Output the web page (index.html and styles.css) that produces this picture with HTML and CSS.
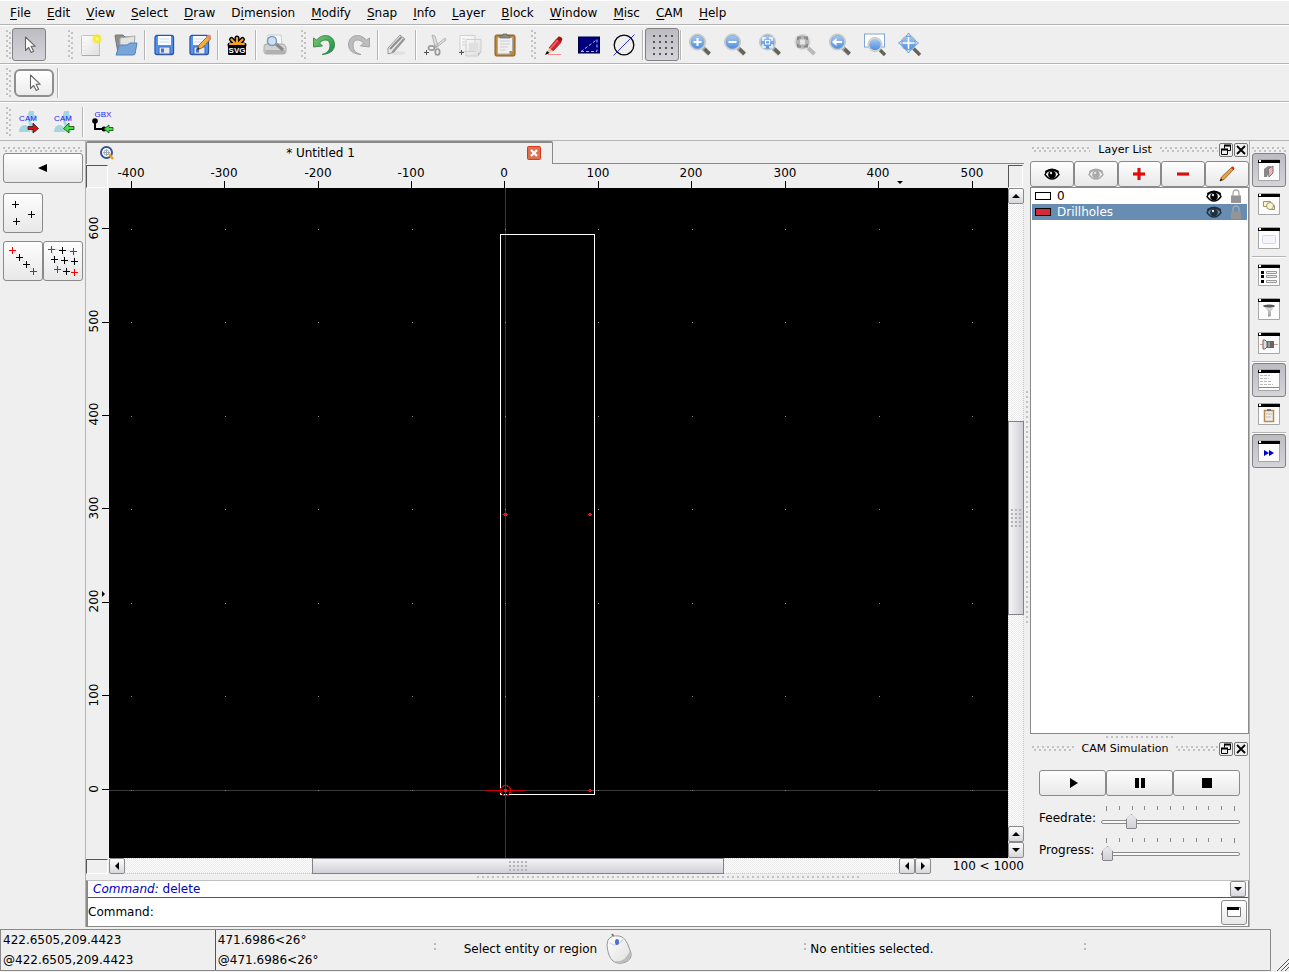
FILE: index.html
```
<!DOCTYPE html>
<html lang="en">
<head>
  <meta charset="UTF-8">
  <title>Untitled 1</title>
  <link rel="stylesheet" href="styles.css">
</head>
<body>

  <svg class="sprite" width="0" height="0" aria-hidden="true">
    <defs>
      <linearGradient id="blue" x1="0" y1="0" x2="0" y2="1"><stop offset="0" stop-color="#a9c8ee"/><stop offset="1" stop-color="#4d8fe0"/></linearGradient>
      <linearGradient id="paper" x1="0" y1="0" x2="1" y2="1"><stop offset="0" stop-color="#fff"/><stop offset="1" stop-color="#dedede"/></linearGradient>
      <linearGradient id="green" x1="0" y1="0" x2="1" y2="1"><stop offset="0" stop-color="#7ecb6c"/><stop offset="1" stop-color="#158a4a"/></linearGradient>
      <linearGradient id="metal" x1="0" y1="0" x2="0" y2="1"><stop offset="0" stop-color="#e6e6e6"/><stop offset="1" stop-color="#9b9b9b"/></linearGradient>
      <radialGradient id="glow"><stop offset="0" stop-color="#ffffb0"/><stop offset=".4" stop-color="#f5ea20"/><stop offset="1" stop-color="#f5ea20" stop-opacity="0"/></radialGradient>
    </defs>
    <symbol id="arrow" viewBox="0 0 24 24"><path d="M8.500 4v13.500l3.200-3 2.500 5 2.400-1.200-2.500-5h4.200z" fill="#fff" stroke="#666" stroke-width="1.100" stroke-linejoin="round"/></symbol>
    <symbol id="new" viewBox="0 0 24 24"><rect x="2.500" y="2.500" width="18" height="20" rx="1" fill="url(#paper)" stroke="#c2c2c2"/><path d="M5 5v14" stroke="#ddd" stroke-dasharray="1 3"/><path d="M3 22.500h18" stroke="#aaa"/><circle cx="18" cy="6" r="6" fill="url(#glow)"/></symbol>
    <symbol id="open" viewBox="0 0 24 24"><path d="M1 3q0-1 1-1h7l2 2h9v16H4z" fill="#8d8d8d" stroke="#777"/><path d="M6 5l15-2-1 10H6z" fill="#e3e3e3" stroke="#aaa"/><path d="M5 13q1-1 2-1h6l3-2h7l-2 11q-.5 1-2 1H2z" fill="#78a6d8" stroke="#5583b9"/></symbol>
    <symbol id="save" viewBox="0 0 24 24"><rect x="3" y="2.500" width="18.500" height="19" rx="2" fill="#5494ee" stroke="#3155a5" stroke-width="1.300"/><path d="M6 3h13v9H6z" fill="#f8fbff"/><path d="M7.500 6h10M7.500 9h10" stroke="#cbd9ee"/><path d="M7 14h11v7H7z" fill="#e6e8ee" stroke="#3c66b5"/><path d="M9 15.500h3v4H9z" fill="#4576c4"/></symbol>
    <symbol id="pen" viewBox="0 0 24 24"><path d="M10 17l2-5 9-9 3 2.500-9 9.500z" fill="#f6af3c" stroke="#9a6319" stroke-width=".9"/><path d="M19 4l2-2q1-1 2.500.3T24 5l-2 2z" fill="#e98b7b"/><path d="M10 17l1-3 1.700 1.700z" fill="#222"/></symbol>
    <symbol id="flower" viewBox="0 0 24 24"><g stroke="#000" stroke-width="5" stroke-linecap="round"><path d="M12 12V5M12 12L6.500 6.500M12 12l5.500-5.500M12 12H5M12 12h7"/></g><g stroke="#f5a126" stroke-width="2.200" stroke-linecap="round"><path d="M12 12V5M12 12L6.500 6.500M12 12l5.500-5.500M12 11H5M12 11h7"/></g><rect x="3" y="12" width="18" height="10" rx="1"/></symbol>
    <symbol id="print" viewBox="0 0 24 24"><path d="M5 2h13l1 10H4z" fill="#fafafa" stroke="#ccc"/><path d="M1 13q0-2 3-2h15q3 0 4 3v5q0 2-3 2H4q-3 0-3-2z" fill="#d2d2d2" stroke="#aaa"/><path d="M2 17h20v4H3z" fill="#b0b0b0"/><path d="M13 11l7 6" stroke="#888" stroke-width="3"/><circle cx="9" cy="8" r="4.500" fill="#d1e0f1" stroke="#789bc2" stroke-width="1.500"/></symbol>
    <symbol id="undo" viewBox="0 0 24 24"><path d="M1.500 5l3 2Q10 1 17 3q6 3 5.500 9.500T14 21l-4 .5q8-2 8-8.500t-5-6q-3 0-5.500 3l3 3-9 1z" fill="url(#green)" stroke="#267d3a" stroke-width=".8"/></symbol>
    <symbol id="redo" viewBox="0 0 24 24"><path d="M22.500 5l-3 2Q14 1 7 3q-6 3-5.500 9.500T10 21l4 .5q-8-2-8-8.500t5-6q3 0 5.500 3l-3 3 9 1z" fill="#bdbdbd" stroke="#9b9b9b" stroke-width=".8"/></symbol>
    <symbol id="eraser" viewBox="0 0 24 24"><ellipse cx="12" cy="20" rx="9" ry="2" fill="#e1e1e1"/><path d="M3 15L15 2l5 4L9 19l-6 2z" fill="#e8e8e8" stroke="#999"/><path d="M5 16L16.500 4" stroke="#8d8d8d" stroke-width="2"/><path d="M7.500 19L19 6" stroke="#999" stroke-width="2"/></symbol>
    <symbol id="cut" viewBox="0 0 24 24"><path d="M12 14L9 2l3 1 3 10zM12 13L22 5l1 2-10 8z" fill="#ddd" stroke="#aaa" stroke-width=".8"/><ellipse cx="8.500" cy="15" rx="3" ry="2.200" fill="none" stroke="#999" stroke-width="1.700"/><ellipse cx="14.500" cy="19" rx="2.200" ry="3" fill="none" stroke="#999" stroke-width="1.700"/><path d="M1 19.500h5M3.500 17v5" stroke="#555"/></symbol>
    <symbol id="copy" viewBox="0 0 24 24"><path d="M2 2.500h15v16H2zM8 6.500h15V19l-3 4H8z" fill="url(#paper)" stroke="#cfcfcf"/><path d="M11 10h9v8h-9z" fill="#e0e0e0"/><path d="M4 6h3M4 9h3M4 12h3" stroke="#ccc"/><path d="M20 23v-3l3-1z" fill="#bbb"/><path d="M1 19.500h5M3.500 17v5" stroke="#555"/></symbol>
    <symbol id="paste" viewBox="0 0 24 24"><rect x="2" y="2" width="20" height="21" rx="1.500" fill="#bb853a" stroke="#8a5b20"/><path d="M4.500 4.500h15V18l-3 3h-12z" fill="#f0f0f0" stroke="#aaa"/><path d="M7 8h10M7 11h10M7 14h8M7 17h6" stroke="#cfcfcf"/><path d="M7 5V2.500h3V1h4v1.500h3V5z" fill="#878c83" stroke="#666" stroke-width=".7"/><path d="M16.500 21v-3h3z" fill="#888"/></symbol>
    <symbol id="redpen" viewBox="0 0 24 24"><path d="M7 15L14.500 6l4.500 3.500L11 18z" fill="#d6222c" stroke="#8d1717" stroke-width=".7"/><path d="M8 16L16 7" stroke="#f46b6b" stroke-width="1.500"/><path d="M7 15l4 3-7 3.500z" fill="#f0c3a0"/><path d="M3 22l2-4 2.500 2z"/><path d="M14.500 6l2-2.500q3-.5 4 2.500L19 9.500z" fill="#aa1111"/><path d="M6 21.500h13" stroke="#f08c8c"/></symbol>
    <symbol id="rect" viewBox="0 0 24 24"><rect x="1.500" y="4" width="21" height="16" fill="#00007f" stroke="#000040"/><path d="M4 18.500L20 6.500v12z" fill="none" stroke="#aebcff" stroke-dasharray="3 2"/></symbol>
    <symbol id="circle" viewBox="0 0 24 24"><circle cx="12" cy="12" r="9.800" fill="none" stroke="#000" stroke-width="1.300"/><path d="M1.500 22.500L22.500 1.500" stroke="#33d"/></symbol>
    <symbol id="grid" viewBox="0 0 24 24"><g stroke="#555" stroke-width="2" stroke-dasharray="2 4"><path d="M3 3h20M3 9h20M3 15h20M3 21h20"/></g></symbol>
    <symbol id="lens" viewBox="0 0 24 24"><path d="M15 15l6.500 6" stroke="#aaa" stroke-width="4.500"/><path d="M16.500 16l5 5" stroke="#646459" stroke-width="3.400"/><circle cx="9.500" cy="9" r="8" fill="#dedfda" stroke="#c4c5c0"/><circle cx="9.500" cy="9" r="6.700" fill="url(#blue)" stroke="#6f9bd2" stroke-width=".6"/></symbol>
    <symbol id="zin" viewBox="0 0 24 24"><use href="#lens"/><path d="M5.500 9h8M9.500 5v8" stroke="#fff" stroke-width="2"/></symbol>
    <symbol id="zout" viewBox="0 0 24 24"><use href="#lens"/><path d="M5.500 9h8" stroke="#fff" stroke-width="2"/></symbol>
    <symbol id="zauto" viewBox="0 0 24 24"><use href="#lens"/><path d="M5 8V5h3M11 5h3v3M14 11v3h-3M8 14H5v-3" fill="none" stroke="#fff" stroke-width="1.400"/><rect x="7.500" y="7.500" width="4" height="3.500" fill="none" stroke="#fff"/></symbol>
    <symbol id="zsel" viewBox="0 0 24 24"><path d="M15 15l6.500 6" stroke="#b9b9b9" stroke-width="4"/><circle cx="9.500" cy="9" r="7.500" fill="#b4b4b4" stroke="#dcdcdc" stroke-width="1.500"/><path d="M5 7V4.500h3M11 4.500h3V7M14 11v2.500h-3M8 13.500H5V11" fill="none" stroke="#888" stroke-width="2"/><path d="M7 6.500h5v5H7z" fill="#e4e4e4"/></symbol>
    <symbol id="zprev" viewBox="0 0 24 24"><use href="#lens"/><path d="M4 9l4.500-4v3H14v2H8.500v3z" fill="#fff"/></symbol>
    <symbol id="zwin" viewBox="0 0 24 24"><rect x="1.500" y="1" width="20" height="13" fill="#fff" stroke="#80a5d7"/><path d="M17 17l5 5" stroke="#646459" stroke-width="3.400"/><circle cx="12" cy="11.500" r="7" fill="#dedfda" stroke="#c4c5c0"/><circle cx="12" cy="11.500" r="5.800" fill="url(#blue)"/></symbol>
    <symbol id="zpan" viewBox="0 0 24 24"><path d="M15 15l7 7" stroke="#646459" stroke-width="3.400"/><circle cx="10.500" cy="10" r="7.500" fill="url(#blue)" stroke="#c4c5c0"/><path d="M10.500 2v16M2 10h17" stroke="#fff" stroke-width="1.600"/><path d="M10.500 0l2.500 3.500H8zM10.500 20l2.500-3.500H8zM.5 10L4 7.500v5zM20.500 10L17 7.500v5z" fill="#c9dcf5" stroke="#5d94dc" stroke-width=".8"/></symbol>
    <symbol id="cambase" viewBox="0 0 24 24"><path d="M12 1h5v4h2v5h-6l2 4q4 1 4 8h-5q-1-4-2-8l-2-6z" fill="#a4d6df"/><path d="M2 22q0-6 5-7t6 7z" fill="#a4d6df"/></symbol>
    <symbol id="camout" viewBox="0 0 24 24"><path d="M11 16.500h5V13l5.500 5.500L16 23v-3.500h-5z" fill="#e01010" stroke="#222" stroke-width=".8"/></symbol>
    <symbol id="camin" viewBox="0 0 24 24"><path d="M22 16.500h-5V13l-5.500 5.500L17 23v-3.500h5z" fill="#48e048" stroke="#235523" stroke-width=".9"/></symbol>
    <symbol id="gbx" viewBox="0 0 24 24"><path d="M5 11v8h8" fill="none" stroke="#000" stroke-width="2"/><circle cx="5" cy="11" r="2.800"/><circle cx="14" cy="19" r="2.500"/><path d="M23 17.500h-4V15l-5 4 5 4v-2.500h4z" fill="#48e048" stroke="#235523" stroke-width=".9"/></symbol>
    <symbol id="eye" viewBox="0 0 16 14"><path d="M1 7.500Q3 3 8 3t7 4.500Q12 12 8 12T1 7.500z" fill="none" stroke="currentColor" stroke-width="1.400"/><path d="M1 4Q8-1 15 4l-.5 2Q8 1 1.500 6z" fill="currentColor"/><circle cx="8" cy="7.500" r="3.800" fill="currentColor"/><circle cx="7" cy="6" r="1.200" fill="#ddd"/></symbol>
    <symbol id="lock" viewBox="0 0 10 14"><path d="M2 7V4.500Q2 1 5 1t3 3.500V7" fill="none" stroke="#aaa" stroke-width="1.300"/><path d="M0 6.500h10V14H0z" fill="#959595"/></symbol>
    <symbol id="pencil" viewBox="0 0 16 16"><path d="M1 15l1.500-4L12.500 1.500l2 2-9.500 10z" fill="#e5a244" stroke="#83551b" stroke-width=".8"/><path d="M12 2q2-3 3.500.5l-1 1.500z" fill="#d9251e"/><path d="M1 15l1-2.500L3.500 14z"/></symbol>
    <symbol id="win" viewBox="0 0 22 22"><path d="M.5.500h21v21H.5z" fill="#fcfcfc" stroke="#a6a6a6"/><path d="M0 1h22v3H0z"/><path d="M1 1h2v2H1z" fill="#fff"/></symbol>
    <symbol id="float" viewBox="0 0 12 12"><path d="M4.500 4.500v-3h6v5h-3M1.500 5.500h6v5h-6z" fill="none" stroke="#000"/><path d="M4 1.500h7M1 5.500h7" stroke="#000" stroke-width="2"/></symbol>
    <symbol id="close" viewBox="0 0 12 12"><path d="M2 2l8 8M10 2l-8 8" stroke="#000" stroke-width="1.800"/></symbol>
    <symbol id="up" viewBox="0 0 8 8"><path d="M0 6l4-4 4 4z"/></symbol>
    <symbol id="down" viewBox="0 0 8 8"><path d="M0 2l4 4 4-4z"/></symbol>
    <symbol id="left" viewBox="0 0 8 8"><path d="M6 0L2 4l4 4z"/></symbol>
    <symbol id="right" viewBox="0 0 8 8"><path d="M2 0l4 4-4 4z"/></symbol>
  </svg>

  <nav class="menubar">
    <button><u>F</u>ile</button>
    <button><u>E</u>dit</button>
    <button><u>V</u>iew</button>
    <button><u>S</u>elect</button>
    <button><u>D</u>raw</button>
    <button>D<u>i</u>mension</button>
    <button><u>M</u>odify</button>
    <button><u>S</u>nap</button>
    <button><u>I</u>nfo</button>
    <button><u>L</u>ayer</button>
    <button><u>B</u>lock</button>
    <button><u>W</u>indow</button>
    <button><u>M</u>isc</button>
    <button><u>C</u>AM</button>
    <button><u>H</u>elp</button>
  </nav>

  <div class="toolbar">
    <span class="grip"></span>
    <button class="tool on" aria-label="Select"><svg><use href="#arrow"/></svg></button>
    <span class="grip wide"></span>
    <button class="tool" aria-label="New"><svg><use href="#new"/></svg></button>
    <button class="tool" aria-label="Open"><svg><use href="#open"/></svg></button>
    <span class="sep"></span>
    <button class="tool" aria-label="Save"><svg><use href="#save"/></svg></button>
    <button class="tool" aria-label="Save as"><svg><use href="#save"/><use href="#pen"/></svg></button>
    <span class="sep"></span>
    <button class="tool" aria-label="Export SVG"><svg viewBox="0 0 24 24"><use href="#flower"/><text x="12" y="20" text-anchor="middle" class="icon-svg-text">SVG</text></svg></button>
    <span class="sep"></span>
    <button class="tool" aria-label="Print preview"><svg><use href="#print"/></svg></button>
    <span class="grip next"></span>
    <button class="tool" aria-label="Undo"><svg><use href="#undo"/></svg></button>
    <button class="tool" aria-label="Redo"><svg><use href="#redo"/></svg></button>
    <span class="sep"></span>
    <button class="tool" aria-label="Delete"><svg><use href="#eraser"/></svg></button>
    <span class="sep"></span>
    <button class="tool" aria-label="Cut"><svg><use href="#cut"/></svg></button>
    <button class="tool" aria-label="Copy"><svg><use href="#copy"/></svg></button>
    <button class="tool" aria-label="Paste"><svg><use href="#paste"/></svg></button>
    <span class="grip next"></span>
    <button class="tool" aria-label="Draft"><svg><use href="#redpen"/></svg></button>
    <button class="tool" aria-label="Screen linetypes"><svg><use href="#rect"/></svg></button>
    <button class="tool" aria-label="Antialiasing"><svg><use href="#circle"/></svg></button>
    <span class="sep"></span>
    <button class="tool on" aria-label="Grid"><svg><use href="#grid"/></svg></button>
    <span class="sep"></span>
    <button class="tool" aria-label="Zoom in"><svg><use href="#zin"/></svg></button>
    <button class="tool" aria-label="Zoom out"><svg><use href="#zout"/></svg></button>
    <button class="tool" aria-label="Auto zoom"><svg><use href="#zauto"/></svg></button>
    <button class="tool" aria-label="Zoom to selection"><svg><use href="#zsel"/></svg></button>
    <button class="tool" aria-label="Previous view"><svg><use href="#zprev"/></svg></button>
    <button class="tool" aria-label="Window zoom"><svg><use href="#zwin"/></svg></button>
    <button class="tool" aria-label="Pan"><svg><use href="#zpan"/></svg></button>
  </div>

  <div class="toolbar options">
    <span class="grip"></span>
    <button class="mode" aria-label="Selection tool"><svg><use href="#arrow"/></svg></button>
    <span class="sep"></span>
  </div>

  <div class="toolbar">
    <span class="grip"></span>
    <button class="tool" aria-label="CAM export"><svg viewBox="0 0 24 24"><use href="#cambase"/><text x="11" y="11" text-anchor="middle" class="icon-cam-text">CAM</text><use href="#camout"/></svg></button>
    <button class="tool" aria-label="CAM import"><svg viewBox="0 0 24 24"><use href="#cambase"/><text x="11" y="11" text-anchor="middle" class="icon-cam-text">CAM</text><use href="#camin"/></svg></button>
    <span class="sep"></span>
    <button class="tool" aria-label="Gerber import"><svg viewBox="0 0 24 24"><text x="13" y="7" text-anchor="middle" class="icon-cam-text">GBX</text><use href="#gbx"/></svg></button>
  </div>

  <div class="main">
    <aside class="palette">
      <span class="grip-h"></span>
      <button class="push back" aria-label="Back"><svg width="10" height="10" viewBox="0 0 10 10"><path d="M0 5l9-4v8z"/></svg></button>
      <div class="palette-row">
        <button class="push square" aria-label="Point">
          <svg width="38" height="38" viewBox="0 0 38 38" stroke="#000"><path d="M8 10.500h7M11.500 7v7M24 20.500h7M27.500 17v7M9 27.500h7M12.500 24v7"/></svg>
        </button>
      </div>
      <div class="palette-row">
        <button class="push square" aria-label="Points on line">
          <svg width="38" height="38" viewBox="0 0 38 38" stroke="#000"><path d="M8 8l23 22" stroke="#dde"/><path d="M12 15.500h7M15.500 12v7M19 22.500h7M22.500 19v7"/><path stroke="#f00" d="M5 8.500h7M8.500 5v7M26 29.500h7M29.500 26v7"/></svg>
        </button>
        <button class="push square" aria-label="Point grid">
          <svg width="38" height="38" viewBox="0 0 38 38" stroke="#000"><path d="M7 7l23 2v21l-16-3zM18 8l5 21M10 17l20 3" fill="none" stroke="#dde"/><path d="M15 8.500h7M18.500 5v7M7 17.500h7M10.500 14v7M17 18.500h7M20.500 15v7M27 19.500h7M30.500 16v7M19 29.500h7M22.500 26v7"/><path stroke="#f00" d="M4 7.500h7M7.500 4v7M26 9.500h7M29.500 6v7M10 27.500h7M13.500 24v7M27 30.500h7M30.500 27v7"/></svg>
        </button>
      </div>
    </aside>

    <div class="workspace">
      <div class="upper">
        <section class="document">
          <div class="tabs">
            <div class="tab">
              <svg width="14" height="14" viewBox="0 0 14 14"><circle cx="6.500" cy="6.500" r="5.500" fill="#fff" stroke="#37528f" stroke-width="2"/><path d="M6.500 3v7M3 6.500h7" stroke="#9ab"/><circle cx="6.500" cy="6.500" r="2.500" fill="none" stroke="#9ab"/><path d="M9 8l4 5" stroke="#e6a02e" stroke-width="2.500"/></svg>
              <span>* Untitled 1</span>
              <button aria-label="Close tab"><svg width="14" height="14" viewBox="0 0 14 14"><rect x=".5" y=".5" width="13" height="13" rx="1" fill="#e0704d" stroke="#d43a20"/><path d="M4 4l6 6M10 4l-6 6" stroke="#fff" stroke-width="2.300"/></svg></button>
            </div>
            <div class="tab-rest"></div>
          </div>
          <div class="view">
            <span class="corner"></span>
            <svg class="ruler-h">
              <g text-anchor="middle">
                <text x="22" y="13">-400</text>
                <text x="115" y="13">-300</text>
                <text x="209" y="13">-200</text>
                <text x="302" y="13">-100</text>
                <text x="395" y="13">0</text>
                <text x="489" y="13">100</text>
                <text x="582" y="13">200</text>
                <text x="676" y="13">300</text>
                <text x="769" y="13">400</text>
                <text x="863" y="13">500</text>
              </g>
              <path d="M22.500 17v7M115.500 17v7M209.500 17v7M302.500 17v7M395.500 17v7M489.500 17v7M582.500 17v7M676.500 17v7M769.500 17v7M863.500 17v7" stroke="#000"/>
              <path d="M788 17h6l-3 3z"/>
            </svg>
            <span class="corner"></span>

            <svg class="ruler-v">
              <g text-anchor="middle">
                <text transform="translate(12 40) rotate(-90)">600</text>
                <text transform="translate(12 133) rotate(-90)">500</text>
                <text transform="translate(12 226) rotate(-90)">400</text>
                <text transform="translate(12 320) rotate(-90)">300</text>
                <text transform="translate(12 413) rotate(-90)">200</text>
                <text transform="translate(12 507) rotate(-90)">100</text>
                <text transform="translate(12 601) rotate(-90)">0</text>
              </g>
              <path d="M16 40.500h7M16 134.500h7M16 227.500h7M16 320.500h7M16 414.500h7M16 507.500h7M16 601.500h7" stroke="#000"/>
              <path d="M16 403v6l3-3z"/>
            </svg>
            <svg class="canvas">
              <line x1="396.500" y1="0" x2="396.500" y2="100%" stroke="#3a3a3a"/>
              <line x1="0" y1="602.500" x2="100%" y2="602.500" stroke="#3a3a3a"/>
              <g id="gridDots" fill="#8a8a8a"></g>
              <rect x="391.500" y="46.500" width="94" height="560" fill="none" stroke="#fff"/>
              <g stroke="#c80000" fill="none">
                <path d="M376 602.500h41M396.500 582v41"/>
                <circle cx="396.500" cy="602.500" r="5"/>
              </g>
              <g fill="#f01414">
                <path d="M395 325h3v3h-3zM394 326h5v1h-5z"/>
                <path d="M479 326h4v1h-4zM480 325h2v3h-2z"/>
                <path d="M479 602h4v1h-4zM480 601h2v3h-2z"/>
                <path d="M395 601h3v3h-3z"/>
              </g>
            </svg>
            <div class="scroll scroll-v">
              <button aria-label="Scroll up"><svg><use href="#up"/></svg></button>
              <div class="track before"></div>
              <div class="thumb"></div>
              <div class="track after"></div>
              <button aria-label="Scroll up"><svg><use href="#up"/></svg></button>
              <button aria-label="Scroll down"><svg><use href="#down"/></svg></button>
            </div>

            <span class="corner"></span>
            <div class="view-bottom">
              <div class="scroll scroll-h">
                <button aria-label="Scroll left"><svg><use href="#left"/></svg></button>
                <div class="track before"></div>
                <div class="thumb"></div>
                <div class="track after"></div>
                <button aria-label="Scroll left"><svg><use href="#left"/></svg></button>
                <button aria-label="Scroll right"><svg><use href="#right"/></svg></button>
              </div>
              <span class="grid-info">100 &lt; 1000</span>
            </div>
          </div>
        </section>

        <div class="split-v"></div>

        <aside class="dock">
          <div class="dock-title">
            <span class="grip-h"></span><h2>Layer List</h2><span class="grip-h"></span>
            <button aria-label="Float"><svg><use href="#float"/></svg></button>
            <button aria-label="Close"><svg><use href="#close"/></svg></button>
          </div>
          <div class="layer-tools">
            <button class="push" aria-label="Show all layers"><svg width="16" height="14"><use href="#eye"/></svg></button>
            <button class="push dim" aria-label="Hide all layers"><svg width="16" height="14"><use href="#eye"/></svg></button>
            <button class="push" aria-label="Add layer"><svg width="14" height="14" viewBox="0 0 14 14"><path d="M1 7h12M7 1v12" stroke="#811" stroke-width="3"/><path d="M1 7h12M7 1v12" stroke="#f00" stroke-width="2"/></svg></button>
            <button class="push" aria-label="Remove layer"><svg width="14" height="14" viewBox="0 0 14 14"><path d="M1 7h12" stroke="#811" stroke-width="3"/><path d="M1 7h12" stroke="#f00" stroke-width="2"/></svg></button>
            <button class="push" aria-label="Edit layer"><svg width="16" height="16"><use href="#pencil"/></svg></button>
          </div>
          <ul class="layers">
            <li><i class="swatch"></i><span>0</span><svg class="eye"><use href="#eye"/></svg><svg class="lock"><use href="#lock"/></svg></li>
            <li class="selected"><i class="swatch red"></i><span>Drillholes</span><svg class="eye"><use href="#eye"/></svg><svg class="lock"><use href="#lock"/></svg></li>
          </ul>
          <div class="split-h short"></div>
          <div class="dock-title">
            <span class="grip-h"></span><h2>CAM Simulation</h2><span class="grip-h"></span>
            <button aria-label="Float"><svg><use href="#float"/></svg></button>
            <button aria-label="Close"><svg><use href="#close"/></svg></button>
          </div>
          <div class="simulation">
            <div class="transport">
              <button class="push" aria-label="Play"><svg width="10" height="10" viewBox="0 0 10 10"><path d="M2 0l8 5-8 5z"/></svg></button>
              <button class="push" aria-label="Pause"><svg width="10" height="10" viewBox="0 0 10 10"><path d="M0 0h4v10H0zM6 0h4v10H6z"/></svg></button>
              <button class="push" aria-label="Stop"><svg width="10" height="10" viewBox="0 0 10 10"><path d="M0 0h10v10H0z"/></svg></button>
            </div>
            <div class="slider-row">
              <label for="feedrate">Feedrate:</label>
              <div class="slider">
                <div class="ticks"><i></i><i></i><i></i><i></i><i></i><i></i><i></i><i></i><i></i><i></i><i></i></div>
                <input type="range" id="feedrate" min="0" max="100" value="19">
              </div>
            </div>
            <div class="slider-row">
              <label for="progress">Progress:</label>
              <div class="slider">
                <div class="ticks"><i></i><i></i><i></i><i></i><i></i><i></i><i></i><i></i><i></i><i></i><i></i></div>
                <input type="range" id="progress" min="0" max="100" value="0">
              </div>
            </div>
          </div>
        </aside>
      </div>

      <div class="split-h"></div>

      <div class="command">
        <div class="history">
          <span><em>Command:</em> delete</span>
          <button aria-label="History"><svg><use href="#down"/></svg></button>
        </div>
        <div class="prompt">
          <label for="cmd">Command:</label>
          <input type="text" id="cmd">
          <button class="push" aria-label="Command window"><svg width="14" height="10" viewBox="0 0 14 10"><path d="M.5.500h13v9H.5z" fill="#fff" stroke="#777"/><path d="M0 0h12v3H0z"/></svg></button>
        </div>
      </div>
    </div>

    <aside class="panels">
      <span class="grip-h"></span>
      <button class="tool on" aria-label="Layer list"><svg viewBox="0 0 22 22"><use href="#win"/><path d="M6 10l4-3h3l-4 11H6z" fill="#888"/><path d="M10 10l5-3v7l-4 4z" fill="#f2b3b3" stroke="#777"/></svg></button>
      <button class="tool" aria-label="Block list"><svg viewBox="0 0 22 22"><use href="#win"/><path d="M5.500 8.500h7v5h-7z" fill="#fbf3cf" stroke="#9c946c"/><path d="M11.500 12.500h5v4h-5z" fill="none" stroke="#9c946c"/><circle cx="12" cy="13" r="3.500" fill="#fbf3cf" stroke="#9c946c"/></svg></button>
      <button class="tool" aria-label="Viewports"><svg viewBox="0 0 22 22"><use href="#win"/><rect x="4.500" y="8.500" width="13" height="8" rx="1" fill="#f4f6fb" stroke="#cbd9ed"/></svg></button>
      <span class="sep-h"></span>
      <button class="tool" aria-label="Properties"><svg viewBox="0 0 22 22"><use href="#win"/><path d="M3 7h3v3H3zM3 11h3v3H3zM3 16h3v3H3z"/><path d="M8.500 7.500h10v2h-10zM8.500 11.500h10v2h-10zM8.500 16.500h10v2h-10z" fill="#eee" stroke="#999"/></svg></button>
      <button class="tool" aria-label="Filter"><svg viewBox="0 0 22 22"><use href="#win"/><path d="M5 8h12l-4 5v5l-3 1v-6z" fill="url(#metal)"/><ellipse cx="11" cy="8" rx="6" ry="1.500" fill="#555"/></svg></button>
      <button class="tool" aria-label="Library"><svg viewBox="0 0 22 22"><use href="#win"/><path d="M2 12.500h18" stroke="#f09090"/><path d="M5 8h2l2 2v5l-2 2H5z" fill="#ddd" stroke="#666"/><path d="M9 9h7v7H9z" fill="#666"/><path d="M11 10v5" stroke="#ccc"/></svg></button>
      <span class="sep-h"></span>
      <button class="tool on" aria-label="Command line"><svg viewBox="0 0 22 22"><use href="#win"/><path d="M2 6.500h10M2 9.500h9M2 12.500h12M2 15.500h13" stroke="#bbb" stroke-dasharray="3 1"/><path d="M1 18.500h20" stroke="#888"/></svg></button>
      <button class="tool" aria-label="Clipboard"><svg viewBox="0 0 22 22"><use href="#win"/><path d="M6.500 7.500h9v11h-9z" fill="#eee" stroke="#bc8a48" stroke-width="1.500"/><path d="M9 6h4v2H9z" fill="#777"/><path d="M8 11h6M8 14h5" stroke="#bbb"/></svg></button>
      <span class="sep-h"></span>
      <button class="tool on" aria-label="Simulation"><svg viewBox="0 0 22 22"><use href="#win"/><path d="M6 10l5 3-5 3zM11 10l5 3-5 3z" fill="#00c"/></svg></button>
    </aside>
  </div>

  <footer class="status">
    <div class="frame">
      <div class="coords">422.6505,209.4423<br>@422.6505,209.4423</div>
      <div class="coords">471.6986&lt;26°<br>@471.6986&lt;26°</div>
      <div class="hint">
        <span class="handle"></span>
        <span class="hint-text">Select entity or region</span>
        <svg width="26" height="32" viewBox="0 0 26 32"><path d="M8 4L6 1" stroke="#777" stroke-width="2"/><path d="M2 7q3-5 11-4 6 1 9 9l3 8q1 6-5 9-8 3-13-1T1 12z" fill="url(#paper)" stroke="#999"/><path d="M24 18q2 8-5 11-7 2-11-1 11 2 16-10z" fill="#bbb"/><path d="M4 10q7 6 14-5" fill="none" stroke="#ccc"/><ellipse cx="11" cy="9" rx="2" ry="3" fill="#4c6fd2"/></svg>
      </div>
      <div class="hint"><span class="handle"></span><span>No entities selected.</span></div>
      <div class="hint"><span class="handle"></span></div>
    </div>
    <svg width="12" height="12" viewBox="0 0 12 12" stroke="#555"><path d="M0 12L12 0M4 12l8-8M8 12l4-4"/></svg>
  </footer>

  <script>
    // grid points every 100 units
    let dots = document.getElementById("gridDots");
    let xs = [22, 116, 209, 303, 396, 489, 583, 676, 770, 863];
    let ys = [41, 134, 228, 321, 415, 508, 602];

    for (let x of xs) {
      for (let y of ys) {
        let dot = document.createElementNS("http://www.w3.org/2000/svg", "rect");
        dot.setAttribute("x", x);
        dot.setAttribute("y", y);
        dot.setAttribute("width", 1);
        dot.setAttribute("height", 1);
        dots.appendChild(dot);
      }
    }
  </script>

</body>
</html>
```

FILE: styles.css
```
* {
  box-sizing: border-box;
}
body {
  margin: 0;
  height: 100vh;
  display: flex;
  flex-direction: column;
  background: #efefef;
  color: #000;
  font-family: "DejaVu Sans", sans-serif;
  font-size: 12px;
  line-height: 16px;
}
button {
  font: inherit;
  color: inherit;
  background: none;
  border: none;
  padding: 0;
  display: flex;
  align-items: center;
  justify-content: center;
}
svg {
  display: block;
  flex: none;
}
.sprite {
  position: absolute;
}
.icon-svg-text {
  font: bold 8px "Liberation Sans", sans-serif;
  fill: #fff;
}
.icon-cam-text {
  font: 8px "Liberation Sans", sans-serif;
  fill: #22f;
}

/* menu and toolbars */
.menubar {
  display: flex;
  height: 25px;
  padding: 0 2px;
  border-top: 1px solid #fff;
  border-bottom: 1px solid #b4b4b4;
}
.menubar button {
  padding: 0 8px;
}
.menubar u {
  text-underline-offset: 2px;
}
.toolbar {
  display: flex;
  align-items: center;
  gap: 1px;
  height: 39px;
  padding-left: 5px;
  border-top: 1px solid #fff;
  border-bottom: 1px solid #b4b4b4;
}
.toolbar.options {
  height: 38px;
}
.grip {
  width: 6px;
  height: 30px;
  background:
    radial-gradient(circle at 2px 1px, #c2c2c2 1px, transparent 1px) 0 0 / 6px 5px,
    radial-gradient(circle at 5px 3px, #c2c2c2 1px, transparent 1px) 0 0 / 6px 5px;
}
.grip.wide {
  margin-left: 20px;
}
.grip.next {
  margin-left: 7px;
}
.grip-h {
  height: 6px;
  background:
    radial-gradient(circle at 1px 1px, #c2c2c2 1px, transparent 1px) 0 0 / 5px 6px,
    radial-gradient(circle at 3px 4px, #c2c2c2 1px, transparent 1px) 0 0 / 5px 6px;
}
.sep {
  width: 2px;
  height: 30px;
  background: #b4b4b4;
  border-right: 1px solid #fff;
}
.tool {
  width: 34px;
  height: 33px;
  border: 1px solid transparent;
  border-radius: 3px;
}
.tool svg {
  width: 24px;
  height: 24px;
}
.tool.on {
  background: linear-gradient(#bcbcc2, #d4d4da);
  border-color: #828282;
}
.mode {
  width: 40px;
  height: 28px;
  margin: 0 2px;
  border: 2px solid #8f8f8f;
  border-radius: 6px;
  background: linear-gradient(#fff, #ececec);
}
.mode svg {
  width: 24px;
  height: 24px;
}
.push {
  border: 1px solid #8a8a8a;
  border-radius: 3px;
  background: linear-gradient(#fefefe, #e8e8e8);
}

/* left palette */
.main {
  flex: 1;
  min-height: 0;
  display: flex;
}
.palette {
  width: 86px;
  flex: none;
  display: flex;
  flex-direction: column;
  padding: 6px 2px 0 3px;
  border-right: 1px solid #b4b4b4;
}
.back {
  height: 30px;
  margin-bottom: 2px;
}
.palette-row {
  display: flex;
  padding-top: 8px;
}
.square {
  width: 40px;
  height: 40px;
}

/* document */
.workspace {
  flex: 1;
  min-width: 0;
  display: flex;
  flex-direction: column;
  border-right: 1px solid #b4b4b4;
}
.upper {
  flex: 1;
  min-height: 0;
  display: flex;
}
.document {
  flex: 1;
  min-width: 0;
  display: flex;
  flex-direction: column;
}
.tabs {
  display: flex;
  height: 23px;
}
.tab {
  flex: 0 0 calc(50% - 2px);
  display: flex;
  align-items: center;
  justify-content: space-between;
  padding: 0 11px 2px 13px;
  border: 1px solid #8a8a8a;
  border-width: 2px 1px 0;
  border-radius: 2px 2px 0 0;
}
.tab-rest {
  flex: 1;
  border-bottom: 1px solid #8a8a8a;
}
.view {
  flex: 1;
  min-height: 0;
  display: grid;
  grid-template: 24px 1fr 16px / 23px 1fr 16px;
}
.corner {
  margin: 1px 1px 0 0;
  border: 1px solid #fff;
  border-top-color: #555;
  border-left-color: #555;
}
.ruler-h,
.ruler-v,
.canvas {
  width: 100%;
  height: 100%;
  min-height: 0;
}
.canvas {
  background: #000;
  shape-rendering: crispEdges;
}
.scroll {
  display: flex;
}
.scroll-v {
  flex-direction: column;
}
.scroll button,
.history button {
  width: 16px;
  height: 16px;
  flex: none;
  border: 1px solid #8a8a8a;
  border-radius: 2px;
  background: linear-gradient(#fcfcfc, #d8d8dc);
}
.scroll svg,
.history svg {
  width: 8px;
  height: 8px;
}
.track {
  background: repeating-conic-gradient(#eaeaea 0 25%, #fff 0 50%) 0 0 / 2px 2px;
  border: 0 dotted #ccc;
}
.scroll-v .track {
  border-width: 0 1px;
}
.scroll-h .track {
  border-width: 1px 0;
}
.thumb {
  flex: 192;
  display: flex;
  align-items: center;
  justify-content: center;
  border: 1px solid #828282;
  background: linear-gradient(90deg, #f4f4f8, #d0d0d6);
}
.thumb::before {
  content: "";
  width: 12px;
  height: 20px;
  background: radial-gradient(circle at 2px 2px, #b4b4b8 1px, transparent 1px) 0 0 / 4px 4px;
}
.scroll-v .before {
  flex: 218;
}
.scroll-v .after {
  flex: 212;
}
.view-bottom {
  grid-column: 2 / 4;
  display: flex;
}
.scroll-h {
  flex: 1;
}
.scroll-h .thumb {
  flex: 411;
  background: linear-gradient(#f4f4f8, #d0d0d6);
}
.scroll-h .thumb::before {
  width: 20px;
  height: 12px;
}
.scroll-h .before {
  flex: 188;
}
.scroll-h .after {
  flex: 176;
}
.grid-info {
  width: 93px;
  text-align: right;
}
.split-h {
  flex: none;
  width: 33%;
  height: 6px;
  margin: 0 auto;
  background: radial-gradient(circle at 2px 3px, #c2c2c2 1px, transparent 1px) 0 0 / 5px 6px;
}
.split-h.short {
  width: 70px;
}
.split-v {
  width: 6px;
  height: 236px;
  margin: auto 0;
  background: radial-gradient(circle at 3px 2px, #c2c2c2 1px, transparent 1px) 0 0 / 6px 5px;
}

/* docks on the right */
.dock {
  width: 219px;
  flex: none;
  display: flex;
  flex-direction: column;
}
.dock-title {
  display: flex;
  align-items: center;
  gap: 1px;
  height: 18px;
  padding: 0 1px 0 2px;
}
.dock-title .grip-h {
  flex: 1;
}
.dock-title h2 {
  margin: 0 7px;
  font-size: 11px;
  font-weight: normal;
}
.dock-title button {
  width: 14px;
  height: 14px;
  border: 1px solid #777;
  border-radius: 2px;
}
.dock-title svg {
  width: 12px;
  height: 12px;
}
.layer-tools {
  display: flex;
  height: 26px;
  margin-top: 2px;
}
.layer-tools .push,
.transport .push {
  flex: 1;
}
.dim {
  color: #aaa;
}
.layers {
  flex: 1;
  margin: 0;
  padding: 0 1px;
  list-style: none;
  background: #fff;
  border: 1px solid #8a8a8a;
}
.layers li {
  display: flex;
  align-items: center;
  height: 16px;
  padding: 0 6px 0 3px;
}
.layers li span {
  flex: 1;
  margin-left: 6px;
}
.layers .selected {
  background: #678db2;
}
.selected span {
  color: #fff;
}
.swatch {
  width: 16px;
  height: 8px;
  border: 1px solid #000;
  background: #fff;
}
.swatch.red {
  background: #d52b38;
}
.eye {
  width: 16px;
  height: 14px;
}
.selected .eye {
  color: #20303f;
}
.lock {
  width: 10px;
  height: 14px;
  margin-left: 9px;
}
.simulation {
  padding: 12px 9px 8px;
}
.transport {
  display: flex;
  height: 26px;
  margin-bottom: 6px;
}
.slider-row {
  display: flex;
  align-items: center;
  height: 32px;
  gap: 4px;
}
.slider-row label {
  width: 58px;
}
.slider {
  flex: 1;
}
.ticks {
  display: flex;
  justify-content: space-between;
  padding: 0 5px;
}
.ticks i {
  width: 1px;
  height: 4px;
  background: #888;
}
.ticks i:first-child,
.ticks i:last-child {
  height: 5px;
}
.slider input {
  display: block;
  width: 100%;
  height: 16px;
  margin: 3px 0 0;
  appearance: none;
  background: none;
}
.slider input::-webkit-slider-runnable-track {
  height: 4px;
  border: 1px solid #8a8a8a;
  border-radius: 2px;
  background: #f8f8f8;
}
.slider input::-webkit-slider-thumb {
  appearance: none;
  width: 11px;
  height: 15px;
  margin-top: -7px;
  background: linear-gradient(#e8e8ec, #d0d0d6) content-box, #858585;
  padding: 1px;
  clip-path: polygon(50% 0, 100% 35%, 100% 90%, 90% 100%, 10% 100%, 0 90%, 0 35%);
}

/* command line */
.command {
  flex: none;
  background: #fff;
  border: 1px solid #8a8a8a;
  border-top-color: #c0c0c0;
  border-left-width: 2px;
}
.history {
  display: flex;
  justify-content: space-between;
  height: 17px;
  padding: 0 2px 0 5px;
  color: #0000c0;
  border-bottom: 1px solid #555;
}
.prompt {
  display: flex;
  align-items: center;
  height: 28px;
  padding-right: 1px;
}
.prompt input {
  flex: 1;
  min-width: 0;
  border: none;
  outline: none;
  font: inherit;
}
.prompt .push {
  width: 26px;
  height: 25px;
}

/* panel switches */
.panels {
  width: 39px;
  flex: none;
  display: flex;
  flex-direction: column;
  padding: 6px 3px 0 2px;
}
.panels .tool {
  height: 34px;
}
.panels .tool svg {
  width: 22px;
  height: 22px;
}
.sep-h {
  height: 2px;
  margin-top: 1px;
  background: #b4b4b4;
  border-bottom: 1px solid #fff;
}

/* status bar */
.status {
  flex: none;
  display: flex;
  align-items: flex-end;
  justify-content: space-between;
  margin-top: 2px;
  padding-bottom: 1px;
}
.frame {
  flex: 1;
  margin-right: 6px;
  display: grid;
  grid-template-columns: 215fr 218fr 371fr 280fr 186fr;
  height: 42px;
  border: 1px solid #8a8a8a;
}
.coords {
  padding-left: 2px;
  line-height: 20px;
  border-right: 1px solid #555;
}
.coords + .coords {
  border: none;
}
.hint {
  display: flex;
  align-items: center;
  gap: 4px;
  padding-bottom: 2px;
}
.hint-text {
  margin: 0 5px 0 24px;
}
.handle {
  width: 2px;
  height: 7px;
  margin-bottom: 6px;
  background: radial-gradient(circle at 1px 1px, #bbb 1px, transparent 1px) 0 0 / 2px 5px;
}
```
